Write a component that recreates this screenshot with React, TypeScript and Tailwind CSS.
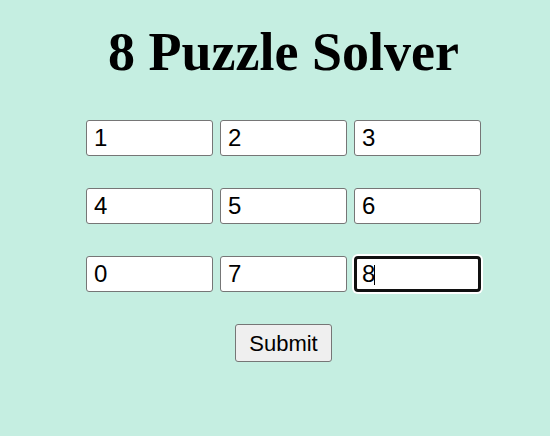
const cells = ['1', '2', '3', '4', '5', '6', '0', '7', '8']

export default function App() {
  return (
    <div className="min-h-[436px] w-full bg-[#c5eee1] pl-[17px] flex flex-col items-center">
      <h1
        className="pt-[21px] text-[54px] leading-[62px] font-bold text-black"
        style={{ fontFamily: '"Liberation Serif", "Times New Roman", serif' }}
      >
        8 Puzzle Solver
      </h1>

      <div className="mt-[37px] grid grid-cols-[127px_127px_127px] gap-x-[7px] gap-y-[32px]">
        {cells.map((c, i) =>
          i === 8 ? (
            <div key={i} className="relative">
              <input
                readOnly
                defaultValue={c}
                className="w-[127px] h-[36px] px-[5px] bg-white text-[24px] text-black rounded-[4px] border-[3px] border-[#101010] shadow-[0_0_0_2px_#ffffff] outline-none"
                style={{ fontFamily: '"Liberation Sans", Arial, sans-serif' }}
              />
              <span className="absolute left-[20px] top-[9px] w-px h-[20px] bg-black" />
            </div>
          ) : (
            <input
              key={i}
              readOnly
              defaultValue={c}
              className="w-[127px] h-[36px] px-[7px] bg-white text-[24px] text-black rounded-[3px] border border-[#767676] outline-none"
              style={{ fontFamily: '"Liberation Sans", Arial, sans-serif' }}
            />
          )
        )}
      </div>

      <button
        className="mt-[32px] h-[38px] px-[13px] bg-[#efefef] border border-[#767676] rounded-[3px] text-[22px] text-black"
        style={{ fontFamily: '"Liberation Sans", Arial, sans-serif' }}
      >
        Submit
      </button>
    </div>
  )
}
